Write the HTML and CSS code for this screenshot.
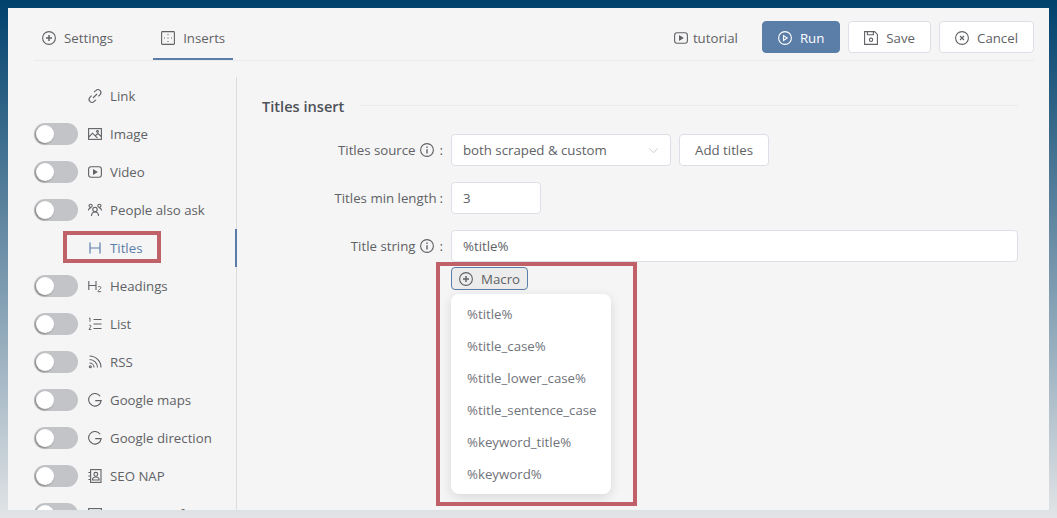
FILE: index.html
```html
<!DOCTYPE html>
<html lang="en">
<head>
<meta charset="utf-8">
<title>Titles insert</title>
<link rel="stylesheet" href="styles.css">
</head>
<body>
<svg class="defs" width="0" height="0" aria-hidden="true">
  <symbol id="i-plus" viewBox="0 0 14 14"><circle cx="7" cy="7" r="6.4"/><path d="M7 4v6M4 7h6" stroke-width="1.5"/></symbol>
  <symbol id="i-play" viewBox="0 0 14 14"><circle cx="7" cy="7" r="6.4"/><path d="M5.6 4.6 9.2 7l-3.6 2.4z"/></symbol>
  <symbol id="i-cross" viewBox="0 0 14 14"><circle cx="7" cy="7" r="6.4"/><path d="M5 5l4 4M9 5l-4 4"/></symbol>
  <symbol id="i-info" viewBox="0 0 14 14"><circle cx="7" cy="7" r="6.4"/><path d="M7 6.2v4.2" stroke-width="1.4"/><path d="M7 3.6v1.4" stroke-width="1.4"/></symbol>
  <symbol id="i-video" viewBox="0 0 14 14"><rect x=".6" y="1.800" width="12.800" height="10.400" rx="2.400"/><path d="M5.600 4.900 8.800 7l-3.200 2.100z" fill="currentColor"/></symbol>
  <symbol id="i-g" viewBox="0 0 14 14"><path d="M12.200 3.300A6.300 6.300 0 1 0 13.200 7.600H7.200"/></symbol>
</svg>
<main class="card">
  <header class="topbar">
    <nav class="tabs">
      <a class="tab"><svg class="ico"><use href="#i-plus"/></svg>Settings</a>
      <a class="tab tab-active">
        <svg class="ico" viewBox="0 0 14 14"><rect x=".6" y=".6" width="12.800" height="12.800" rx=".8"/><path d="M7 3v1M7 6.500v1M7 10v1M3 7h1M6.500 7h1M10 7h1" stroke-dasharray="1 1"/></svg>Inserts</a>
    </nav>
    <div class="actions">
      <a class="tutorial"><svg class="ico"><use href="#i-video"/></svg>tutorial</a>
      <button class="btn btn-primary"><svg class="ico"><use href="#i-play"/></svg>Run</button>
      <button class="btn"><svg class="ico" viewBox="0 0 14 14"><path d="M.6.6h10l2.800 2.800v10H.6z"/><path d="M3.400.8v3h6v-3"/><circle cx="7" cy="8.800" r="1.700"/></svg>Save</button>
      <button class="btn"><svg class="ico"><use href="#i-cross"/></svg>Cancel</button>
    </div>
  </header>

  <div class="body">
    <aside class="sidebar">
      <div class="row"><span class="slot"></span><svg class="ico" viewBox="0 0 14 14"><path d="M6 3.200 7.800 1.600a2.900 2.900 0 0 1 4.300 4L10.400 7.400"/><path d="M8 10.800 6.200 12.400a2.900 2.900 0 0 1-4.300-4L3.600 6.600"/><path d="M5 9l4-4"/></svg><span>Link</span></div>
      <div class="row"><span class="toggle"></span><svg class="ico" viewBox="0 0 14 14"><rect x=".6" y="1.600" width="12.800" height="10.800"/><path d="M.8 10 4.500 6.200l5 5M7.500 8.500l2.500-2 3.300 3"/><circle cx="9.500" cy="4.500" r=".9"/></svg><span>Image</span></div>
      <div class="row"><span class="toggle"></span><svg class="ico"><use href="#i-video"/></svg><span>Video</span></div>
      <div class="row"><span class="toggle"></span><svg class="ico" viewBox="0 0 14 14"><circle cx="7" cy="6.500" r="2.200"/><path d="M3.500 13c0-2.500 1.500-4 3.500-4s3.500 1.500 3.500 4"/><circle cx="2.600" cy="2.800" r="1.600"/><circle cx="11.400" cy="2.800" r="1.600"/><path d="M.4 7.500c.2-1.500 1-2.500 2.400-2.500M13.600 7.500c-.2-1.500-1-2.500-2.400-2.500"/></svg><span>People also ask</span></div>
      <div class="row row-active"><span class="slot"></span><svg class="ico" viewBox="0 0 14 14"><path d="M2 1.500v11M12 1.500v11M2 7h10" stroke-width="1.200"/></svg><span>Titles</span></div>
      <div class="row"><span class="toggle"></span><svg class="ico" viewBox="0 0 14 14"><path d="M.8 2v9M8 2v9M.8 6.500H8"/><path d="M10 8.200c.4-1 2.900-1 2.900.5 0 1.200-2.900 2.400-3 4h3.200" stroke-width=".9"/></svg><span>Headings</span></div>
      <div class="row"><span class="toggle"></span><svg class="ico" viewBox="0 0 14 14"><path d="M5.500 2.500h8M5.500 7h8M5.500 11.500h8" stroke-width="1.200"/><path d="M1 1.500l1-.6v4M1 8.700c.4-.8 2.200-.7 2 .5L1 12.500h2.400" stroke-width=".9"/></svg><span>List</span></div>
      <div class="row"><span class="toggle"></span><svg class="ico" viewBox="0 0 14 14"><path d="M1.500 1a11.500 11.500 0 0 1 11.500 11.500M1.500 4.500a8 8 0 0 1 8 8M1.500 8a4.500 4.500 0 0 1 4.500 4.500"/><circle cx="2.300" cy="11.700" r="1"/></svg><span>RSS</span></div>
      <div class="row"><span class="toggle"></span><svg class="ico"><use href="#i-g"/></svg><span>Google maps</span></div>
      <div class="row"><span class="toggle"></span><svg class="ico"><use href="#i-g"/></svg><span>Google direction</span></div>
      <div class="row"><span class="toggle"></span><svg class="ico" viewBox="0 0 14 14"><rect x="2.600" y=".6" width="10.400" height="12.800"/><circle cx="7.800" cy="5.300" r="1.900"/><path d="M4.400 11c0-2 1.400-3 3.400-3s3.400 1 3.400 3zM.4 3.500h2.200M.4 7h2.200M.4 10.500h2.200"/></svg><span>SEO NAP</span></div>
      <div class="row"><span class="toggle"></span><svg class="ico" viewBox="0 0 14 14"><rect x=".6" y="1.600" width="12.800" height="10.800"/><path d="M.6 5h12.800"/></svg><span>Business info</span></div>
    </aside>

    <section class="content">
      <div class="section-title"><h2>Titles insert</h2><span class="rule"></span></div>
      <form class="form">
        <label class="label">Titles source <svg class="ico info"><use href="#i-info"/></svg><span class="colon">:</span></label>
        <div class="field">
          <div class="select">both scraped &amp; custom<svg class="chev" viewBox="0 0 12 8"><path d="M1 1.500 6 6.500l5-5"/></svg></div>
          <button class="btn btn-add" type="button">Add titles</button>
        </div>
        <label class="label">Titles min length<span class="colon tight">:</span></label>
        <div class="field"><div class="input input-short">3</div></div>
        <label class="label">Title string <svg class="ico info"><use href="#i-info"/></svg><span class="colon">:</span></label>
        <div class="field field-col">
          <div class="input input-full">%title%</div>
          <button class="macro" type="button"><svg class="ico"><use href="#i-plus"/></svg>Macro</button>
          <ul class="menu">
            <li>%title%</li>
            <li>%title_case%</li>
            <li>%title_lower_case%</li>
            <li>%title_sentence_case</li>
            <li>%keyword_title%</li>
            <li>%keyword%</li>
          </ul>
        </div>
      </form>
    </section>
  </div>
  <div class="mark mark-titles"></div>
  <div class="mark mark-macro"></div>
</main>
</body>
</html>
```

FILE: styles.css
```css
* { box-sizing: border-box; }

html, body { height: 100%; }

body {
  margin: 0;
  height: 518px;
  padding: 8px;
  overflow: hidden;
  background: linear-gradient(180deg, #00416d 0%, #e2e4e6 100%);
  font-family: "Open Sans", "Noto Sans", sans-serif;
  font-size: 13.25px;
  color: #5a5e66;
}

.defs { position: absolute; }

.card {
  position: relative;
  height: 502px;
  background: #f5f5f5;
  padding: 0 15px 0 26px;
  overflow: hidden;
}

.ico {
  width: 14px;
  height: 14px;
  flex: none;
  fill: none;
  stroke: currentColor;
  stroke-width: 1.1;
  overflow: visible;
}

.topbar {
  height: 53px;
  display: flex;
  align-items: flex-end;
  justify-content: space-between;
  border-bottom: 1px solid #ebebeb;
}

.tabs { display: flex; gap: 32px; height: 100%; }

.tab {
  display: flex;
  align-items: center;
  gap: 8px;
  padding: 9px 8px 0;
  height: 100%;
  margin-bottom: -1px;
  border-bottom: 2px solid transparent;
  color: #606266;
}

.tab-active { border-bottom-color: #5b7ea9; }

.actions {
  display: flex;
  align-items: center;
  gap: 8px;
  height: 100%;
  padding-top: 13px;
  padding-bottom: 7px;
}

.tutorial {
  display: flex;
  align-items: center;
  gap: 5px;
  margin-right: 16px;
  padding-top: 1px;
  color: #606266;
}

.btn {
  display: inline-flex;
  align-items: center;
  justify-content: center;
  gap: 8px;
  height: 32px;
  padding: 1px 15px 0;
  border: 1px solid #dcdfe6;
  border-radius: 4px;
  background: #fff;
  font: inherit;
  color: #606266;
}

.btn-primary {
  background: #5b7ea9;
  border-color: #5b7ea9;
  color: #fff;
}

.body {
  display: grid;
  grid-template-columns: 203px 1fr;
  margin-top: 16px;
}

.sidebar {
  height: 470px;
  border-right: 1px solid #dcdcdc;
}

.row {
  position: relative;
  display: flex;
  align-items: center;
  height: 38px;
  color: #606266;
}

.row-active { color: #5b7ea9; }

.row-active::after {
  content: "";
  position: absolute;
  right: -1px;
  top: 0;
  bottom: 0;
  width: 2px;
  background: #5b7ea9;
}

.slot, .toggle { width: 44px; height: 22px; flex: none; margin-right: 10px; }

.toggle {
  position: relative;
  border-radius: 11px;
  background: #c3c4c7;
}

.toggle::after {
  content: "";
  position: absolute;
  left: 2px;
  top: 2px;
  width: 18px;
  height: 18px;
  border-radius: 50%;
  background: #fff;
  box-shadow: -1px 1px 2px rgba(0, 0, 0, .35);
}

.row .ico { margin-right: 8px; }

.content { padding: 17px 16px 0 25px; }

.section-title { display: flex; align-items: center; gap: 16px; height: 24px; }

.section-title h2 {
  margin: 0;
  font-size: 14.6px;
  font-weight: 600;
  color: #4d5159;
}

.rule { flex: 1; height: 1px; background: #ebebeb; margin-top: -2px; }

.form {
  display: grid;
  grid-template-columns: 181px 1fr;
  column-gap: 8px;
  row-gap: 16px;
  margin-top: 16px;
}

.label {
  display: flex;
  align-items: center;
  justify-content: flex-end;
  height: 32px;
  color: #606266;
  white-space: nowrap;
}

.info { margin-left: 4px; }

.colon { margin-left: 6px; }

.colon.tight { margin-left: 3px; }

.field { display: flex; gap: 8px; }

.field-col { flex-direction: column; align-items: flex-start; gap: 0; }

.select, .input {
  height: 32px;
  display: flex;
  align-items: center;
  padding: 0 11px;
  border: 1px solid #dcdfe6;
  border-radius: 4px;
  background: #fff;
  color: #606266;
}

.select { width: 220px; justify-content: space-between; }

.chev { width: 11px; height: 7px; fill: none; stroke: #c0c4cc; stroke-width: 1; }

.btn-add { width: 90px; padding: 0; }

.input-short { width: 90px; }

.input-full { width: 100%; }

.macro {
  display: inline-flex;
  align-items: center;
  gap: 8px;
  height: 23px;
  margin-top: 5px;
  padding: 0 7px;
  border: 1px solid #5b7ea9;
  border-radius: 4px;
  background: #ececec;
  font: inherit;
  color: #606266;
}

.menu {
  width: 160px;
  margin: 4px 0 0;
  padding: 4px 0;
  list-style: none;
  background: #fff;
  border-radius: 8px;
  box-shadow: 0 3px 12px rgba(0, 0, 0, .12);
}

.menu li {
  height: 32px;
  line-height: 32px;
  padding-left: 16px;
  color: #70737a;
  white-space: nowrap;
}

.mark {
  position: absolute;
  border: 4px solid #c0616a;
  pointer-events: none;
}

.mark-titles { left: 55px; top: 223px; width: 98px; height: 32px; }

.mark-macro { left: 428px; top: 254px; width: 201px; height: 244px; }
```
